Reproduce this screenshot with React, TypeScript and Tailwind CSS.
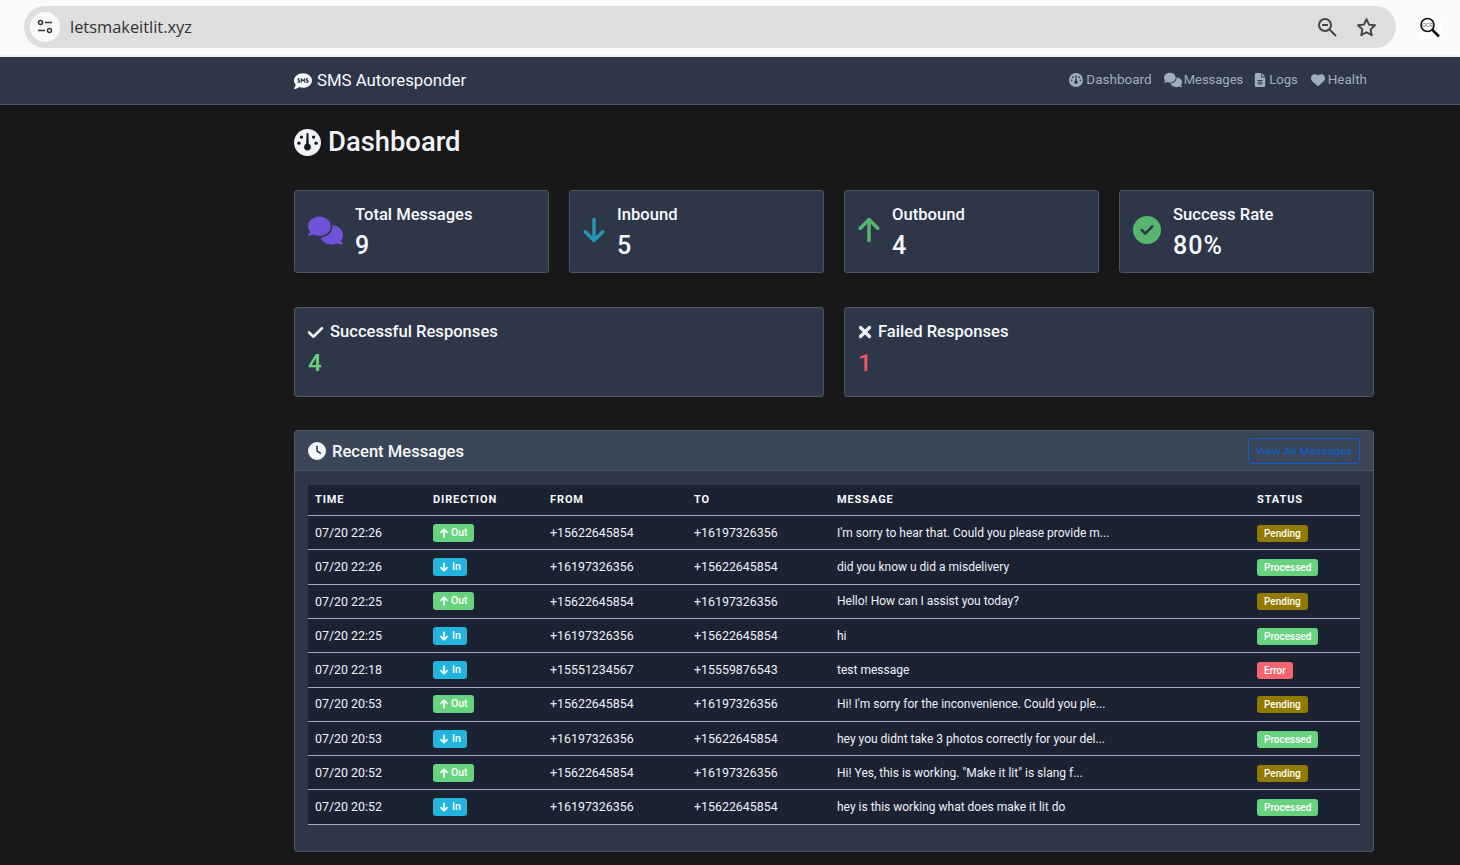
import React from "react";
import { FaCommentSms, FaComments, FaFileLines, FaHeart, FaArrowDown, FaArrowUp, FaCircleCheck, FaCheck, FaXmark, FaClock } from "react-icons/fa6";

const font = "font-['Roboto','Noto_Sans',sans-serif]";

type Row = [string, "Out" | "In", string, string, string, "Pending" | "Processed" | "Error"];
const rows: Row[] = [
  ["07/20 22:26", "Out", "+15622645854", "+16197326356", "I'm sorry to hear that. Could you please provide m...", "Pending"],
  ["07/20 22:26", "In", "+16197326356", "+15622645854", "did you know u did a misdelivery", "Processed"],
  ["07/20 22:25", "Out", "+15622645854", "+16197326356", "Hello! How can I assist you today?", "Pending"],
  ["07/20 22:25", "In", "+16197326356", "+15622645854", "hi", "Processed"],
  ["07/20 22:18", "In", "+15551234567", "+15559876543", "test message", "Error"],
  ["07/20 20:53", "Out", "+15622645854", "+16197326356", "Hi! I'm sorry for the inconvenience. Could you ple...", "Pending"],
  ["07/20 20:53", "In", "+16197326356", "+15622645854", "hey you didnt take 3 photos correctly for your del...", "Processed"],
  ["07/20 20:52", "Out", "+15622645854", "+16197326356", "Hi! Yes, this is working. \"Make it lit\" is slang f...", "Pending"],
  ["07/20 20:52", "In", "+16197326356", "+15622645854", "hey is this working what does make it lit do", "Processed"],
];

function Gauge({ size, hole }: { size: number; hole: string }) {
  return (
    <svg width={size} height={size} viewBox="0 0 24 24" className="shrink-0">
      <circle cx="12" cy="12" r="12" fill="currentColor" />
      <path d="M11.2 3.5h1.6l.4 10h-2.4z" fill={hole} />
      <circle cx="12" cy="16" r="3" fill={hole} />
      <circle cx="6.6" cy="7.2" r="1.5" fill={hole} />
      <circle cx="17.4" cy="7.2" r="1.5" fill={hole} />
      <circle cx="4.4" cy="12.6" r="1.5" fill={hole} />
      <circle cx="19.6" cy="12.6" r="1.5" fill={hole} />
    </svg>
  );
}

function StatCard({ icon, label, value, iconBox }: { icon: React.ReactNode; label: string; value: string; iconBox: string }) {
  return (
    <div className="h-[83px] rounded-[3px] border border-[#4a5568] bg-[#2d3748] flex items-center pl-[13px]">
      <div className={`${iconBox} flex justify-start shrink-0`}>{icon}</div>
      <div className="pt-[1px]">
        <div className="text-[16.6px] leading-[20px] font-medium text-[#f7fafc]">{label}</div>
        <div className="mt-[7px] text-[25px] leading-[28px] tracking-[1px] font-medium text-[#f7fafc]">{value}</div>
      </div>
    </div>
  );
}

function ResponseCard({ icon, label, value, color, gap }: { icon: React.ReactNode; label: string; value: string; color: string; gap: string }) {
  return (
    <div className="h-[90px] rounded-[3px] border border-[#4a5568] bg-[#2d3748] pl-[13px] pt-[14px]">
      <div className={`flex items-center ${gap} text-[16.6px] leading-[20px] font-medium text-[#f7fafc]`}>
        {icon}
        <span>{label}</span>
      </div>
      <div className={`mt-[7px] text-[24px] leading-[28px] font-medium ${color}`}>{value}</div>
    </div>
  );
}

export default function App() {
  return (
    <div className={`min-h-[865px] h-[865px] overflow-hidden bg-[#181818] ${font}`}>
      <div className="h-[57px] bg-[#fafafa] pt-[6px] pl-[24px] pr-[64px] border-b-2 border-[#f0f0f0]">
        <div className="relative">
          <div className="h-[42px] rounded-full bg-[#dedede] flex items-center pl-[6px] pr-[19px]">
            <div className="w-[30px] h-[30px] rounded-full bg-[#fafafa] flex items-center justify-center">
              <svg width="18" height="16" viewBox="0 0 18 16" fill="none" stroke="#333" strokeWidth="1.5">
                <circle cx="4.5" cy="3.5" r="2" />
                <path d="M9 3.5h7" />
                <path d="M2 11.5h7" />
                <circle cx="13.5" cy="11.5" r="2" />
              </svg>
            </div>
            <span className="ml-[10px] mt-[1px] text-[16.4px] text-[#333] font-['Open_Sans',sans-serif]">letsmakeitlit.xyz</span>
            <div className="ml-auto flex items-center gap-[18px]">
              <svg width="21" height="21" viewBox="0 0 21 21" fill="none" stroke="#444" strokeWidth="2">
                <circle cx="8" cy="8" r="6" />
                <path d="M5 8h6" />
                <path d="M12.5 12.5l6.5 6.5" />
              </svg>
              <svg width="21" height="21" viewBox="0 0 24 24" fill="none" stroke="#444" strokeWidth="2.2" strokeLinejoin="round">
                <path d="M12 2.5l2.9 6.2 6.8.8-5 4.6 1.3 6.7-6-3.4-6 3.4 1.3-6.7-5-4.6 6.8-.8z" />
              </svg>
            </div>
          </div>
          <div className="absolute left-[1395px] top-[11px] w-[22px] h-[22px] bg-white">
            <svg width="22" height="22" viewBox="0 0 22 22" fill="none">
              <circle cx="8.5" cy="8" r="6.5" stroke="#111" strokeWidth="1.6" />
              <path d="M13.5 13l6.5 6.5" stroke="#111" strokeWidth="2.6" />
              <text x="8.5" y="9.8" textAnchor="middle" fontSize="5" fill="#555" fontFamily="Liberation Sans, sans-serif">OCR</text>
            </svg>
          </div>
        </div>
      </div>

      <nav className="h-[48px] bg-[#2d3748] border-b border-[#4a5568] pl-[294px] pr-[93px] flex items-center">
        <div className="flex items-center gap-[5px] text-[16.8px] text-[#f7fafc]">
          <FaCommentSms className="text-[18px]" />
          <span>SMS Autoresponder</span>
        </div>
        <div className="ml-auto mb-[2px] flex items-center text-[13.5px] text-[#a0aec0]">
          <span className="flex items-center gap-[3px]"><Gauge size={14} hole="#2d3748" />Dashboard</span>
          <span className="ml-[12px] flex items-center gap-[2px] text-[13px]"><FaComments className="text-[18px]" />Messages</span>
          <span className="ml-[10px] flex items-center gap-[2px] text-[13px]"><FaFileLines className="text-[14px]" />Logs</span>
          <span className="ml-[13px] flex items-center gap-[3px]"><FaHeart className="text-[14px]" />Health</span>
        </div>
      </nav>

      <main className="ml-[294px] w-[1080px]">
        <h1 className="pt-[15px] pb-[26px] h-[85px] flex items-center gap-[7px] text-[27.4px] leading-[36px] font-medium text-[#f0f4f8]">
          <Gauge size={27} hole="#181818" />
          Dashboard
        </h1>

        <div className="grid grid-cols-4 gap-[20px]">
          <StatCard iconBox="w-[47px] mb-[2px]" icon={<FaComments className="text-[35px] text-[#6f52d8]" />} label="Total Messages" value="9" />
          <StatCard iconBox="w-[34px] mb-[4px]" icon={<FaArrowDown className="text-[28px] -ml-[3px] text-[#2596b1]" />} label="Inbound" value="5" />
          <StatCard iconBox="w-[34px] mb-[4px]" icon={<FaArrowUp className="text-[28px] -ml-[3px] text-[#58b56e]" />} label="Outbound" value="4" />
          <StatCard iconBox="w-[40px] mb-[4px]" icon={<FaCircleCheck className="text-[28px] text-[#58b56e]" />} label="Success Rate" value="80%" />
        </div>

        <div className="grid grid-cols-2 gap-[20px] mt-[34px]">
          <ResponseCard gap="gap-[6px]" icon={<FaCheck className="text-[17px] -ml-[1px] [stroke-width:20]" />} label="Successful Responses" value="4" color="text-[#68d37f]" />
          <ResponseCard gap="gap-[4px]" icon={<FaXmark className="text-[18px] -ml-[2px] [stroke-width:30]" />} label="Failed Responses" value="1" color="text-[#f2545f]" />
        </div>

        <section className="mt-[33px] h-[422px] rounded-[3px] border border-[#4a5568] bg-[#2d3748]">
          <header className="h-[40px] bg-[#3a4556] border-b border-[#4a5568] flex items-center pl-[13px] pr-[13px]">
            <FaClock className="text-[18px] text-[#f7fafc]" />
            <span className="ml-[6px] mt-[3px] text-[16.6px] font-medium text-[#f7fafc]">Recent Messages</span>
            <span className="ml-auto h-[26px] w-[112px] pt-[2px] flex items-center justify-center rounded-[3px] border border-[#0f5fcc] text-[11.5px] text-[#0f5fcc]">View All Messages</span>
          </header>
          <div className="px-[13px] pt-[14px]">
            <table className="w-[1052px] table-fixed border-collapse bg-[#1b2231] text-[12px] text-[#edf2f7]">
              <colgroup>
                <col className="w-[118px]" />
                <col className="w-[117px]" />
                <col className="w-[144px]" />
                <col className="w-[143px]" />
                <col className="w-[420px]" />
                <col />
              </colgroup>
              <thead>
                <tr className="h-[30.6px] border-b border-[#a0aec0] text-left text-[11px] tracking-[0.9px] font-bold text-[#f7fafc]">
                  <th className="pl-[7px] font-bold">TIME</th>
                  <th className="pl-[7px] font-bold">DIRECTION</th>
                  <th className="pl-[7px] font-bold">FROM</th>
                  <th className="pl-[7px] font-bold">TO</th>
                  <th className="pl-[7px] font-bold">MESSAGE</th>
                  <th className="pl-[7px] font-bold">STATUS</th>
                </tr>
              </thead>
              <tbody>
                {rows.map((r, i) => (
                  <tr key={i} className="h-[34.3px] border-b border-[#a0aec0]">
                    <td className="pl-[7px] pt-[1px] text-[12.4px]">{r[0]}</td>
                    <td className="pl-[7px] pt-[1px]">
                      {r[1] === "Out" ? (
                        <span className="inline-flex items-center gap-[2px] h-[18px] px-[6px] rounded-[3px] bg-[#68d37f] text-[10.5px] font-medium text-white"><FaArrowUp className="text-[10px] [stroke-width:30]" />Out</span>
                      ) : (
                        <span className="inline-flex items-center gap-[3px] h-[18px] px-[6px] rounded-[3px] bg-[#22b4dc] text-[10.5px] font-medium text-white"><FaArrowDown className="text-[10px] [stroke-width:30]" />In</span>
                      )}
                    </td>
                    <td className="pl-[7px] pt-[1px] text-[12.4px]">{r[2]}</td>
                    <td className="pl-[7px] pt-[1px] text-[12.4px]">{r[3]}</td>
                    <td className="pl-[7px] whitespace-nowrap">{r[4]}</td>
                    <td className="pl-[7px]">
                      {r[5] === "Pending" && <span className="inline-flex items-center h-[17px] px-[7px] rounded-[3px] bg-[#927a00] text-[10px] font-medium text-white">Pending</span>}
                      {r[5] === "Processed" && <span className="inline-flex items-center h-[17px] px-[7px] rounded-[3px] bg-[#68d37f] text-[10px] font-medium text-white">Processed</span>}
                      {r[5] === "Error" && <span className="inline-flex items-center h-[17px] px-[7px] rounded-[3px] bg-[#f56570] text-[10px] font-medium text-white">Error</span>}
                    </td>
                  </tr>
                ))}
              </tbody>
            </table>
          </div>
        </section>
      </main>
    </div>
  );
}
